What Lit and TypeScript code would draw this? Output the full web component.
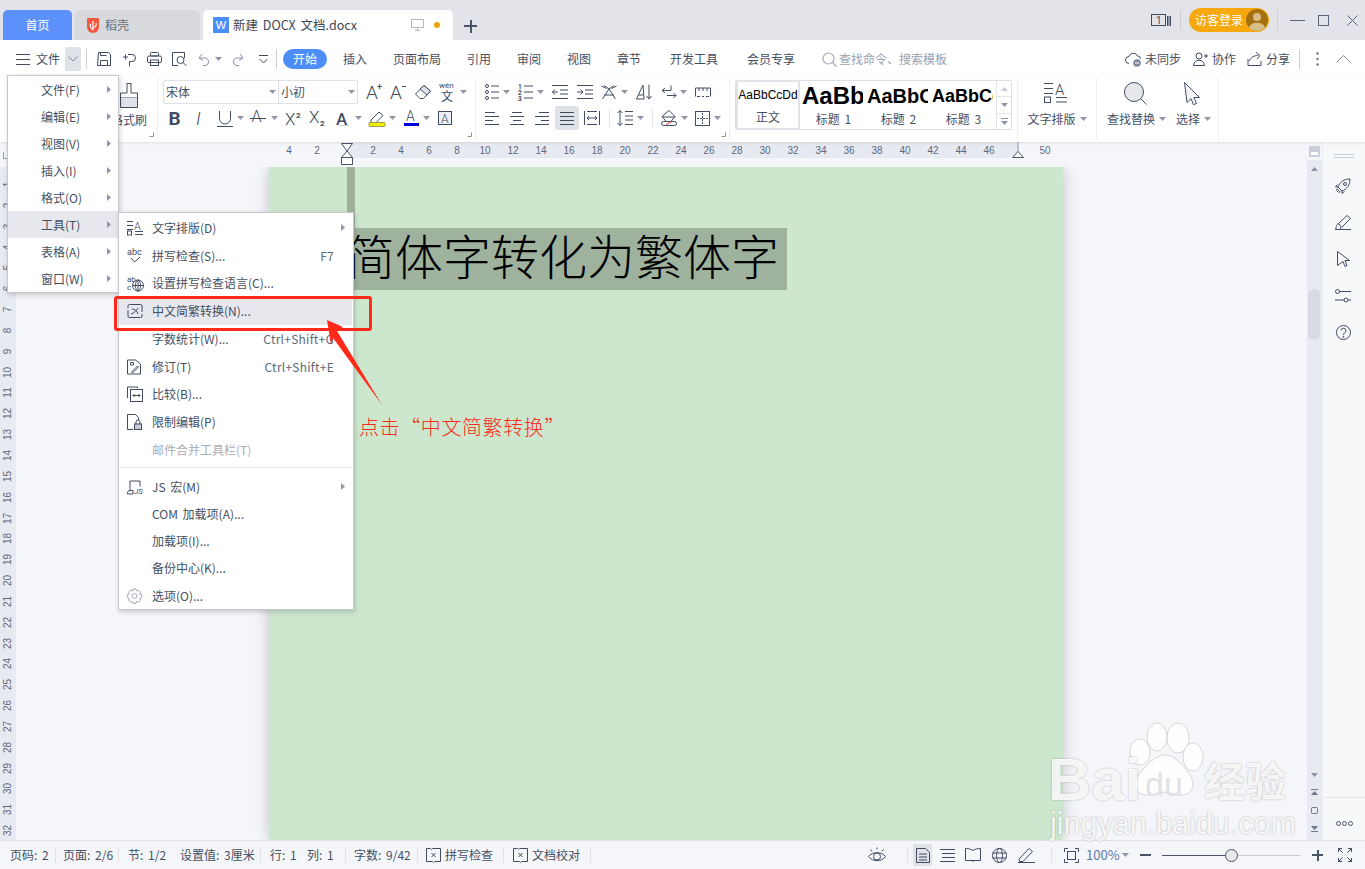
import { LitElement, html, css } from "lit";
import { customElement } from "lit/decorators.js";
import { unsafeSVG } from "lit/directives/unsafe-svg.js";

const S = (w: number, h: number, c: string) =>
  html`<svg class="ic" width=${w} height=${h} viewBox="0 0 ${w} ${h}">${unsafeSVG(c)}</svg>`;

// place items along a row: x values are turned into gaps between flowing cells
const row = (start: number, items: [number, number, unknown][], cls = "row") => {
  let p = start;
  return html`<div class=${cls}>${items.map(([x, w, t]) => {
    const m = x - p;
    p = x + w;
    return html`<div class="cell" style="margin-left:${m}px;width:${w}px">${t}</div>`;
  })}</div>`;
};
const T = (s: string, cls = "") => html`<span class="t ${cls}">${s}</span>`;
const caret = S(7, 4, '<path d="M0 0h7L3.5 4z" fill="#8f96a6" stroke="none"/>');
const tx = (x: number, y: number, s: string, size: number, extra = "") =>
  `<text x="${x}" y="${y}" font-size="${size}" font-family="Roboto, Liberation Sans, sans-serif" fill="#414b62" stroke="none" ${extra.includes("font-weight") ? "" : 'font-weight="300"'} ${extra}>${s}</text>`;
const lines = (arr: number[][]) => arr.map(([a, b, c, d]) => `<path d="M${a} ${b}L${c} ${d}"/>`).join("");

const I = {
  burger: S(14, 11, lines([[0, .5, 14, .5], [0, 5.5, 14, 5.5], [0, 10.5, 14, 10.5]])),
  chev: S(10, 6, '<path d="M.5 .5L5 5 9.5 .5" stroke="#7d8597"/>'),
  save: S(14, 14, '<path d="M1.5.5h10l2 2v11h-13z"/><path d="M3.5 13.5v-5h7v5"/><path d="M3.5.5v3h6"/>'),
  pdf: S(15, 15, '<path d="M6 2.5h4a3.5 3.5 0 0 1 0 7H7.5v5"/><path d="M1 5h5M3.5 2.5v5"/>'),
  print: S(15, 14, '<rect x="3.5" y=".5" width="8" height="3.5" rx="1"/><rect x=".5" y="4" width="14" height="6.5" rx="1.5"/><rect x="3.5" y="8" width="8" height="5.5"/>'),
  preview: S(15, 15, '<path d="M6 13.5H.5v-13h12V6"/><circle cx="8.5" cy="8" r="3.5"/><path d="M11 10.5l3.5 3.5"/>'),
  undo: S(13, 13, '<path d="M4 1L1 5l4 2.5M1.5 5H8a4 4 0 0 1 0 7.5H5" stroke="#8b93a5"/>'),
  redo: S(13, 13, '<path d="M9 1l3 4-4 2.5M11.5 5H5a4 4 0 0 0 0 7.5h3" stroke="#8b93a5"/>'),
  more: S(11, 9, '<path d="M1 .5h9M1.5 4L5.5 8 9.5 4"/>'),
  search: S(15, 15, '<circle cx="6.5" cy="6.5" r="5.5" stroke="#a4abba" stroke-width="1.2"/><path d="M10.5 10.5l4 4" stroke="#a4abba" stroke-width="1.2"/>'),
  cloud: S(16, 15, '<path d="M4 11.5a3.5 3.5 0 0 1 0-7 4.5 4.5 0 0 1 8.5-.5 3 3 0 0 1 3 3"/><circle cx="12" cy="11" r="3.8" fill="#808a9e" stroke="none"/><path d="M10 11h4" stroke="#fff"/>'),
  user: S(16, 14, '<circle cx="6" cy="4" r="3"/><path d="M.5 13.5c0-7 11-7 11 0z"/><path d="M11 4h4M13 2v4"/>'),
  share: S(15, 14, '<path d="M1 7v6.5h13V9"/><path d="M2.5 9C4 5 7 3.5 11 3.5M9 .5l4 3-3 3.5"/>'),
  vdots: S(3, 14, '<circle cx="1.5" cy="1.5" r="1.2" fill="#6b7487" stroke="none"/><circle cx="1.5" cy="7" r="1.2" fill="#6b7487" stroke="none"/><circle cx="1.5" cy="12.5" r="1.2" fill="#6b7487" stroke="none"/>'),
  up: S(15, 8, '<path d="M.5 7.5L7.5 .5l7 7" stroke="#7d8597"/>'),
  brush: S(20, 25, '<path d="M8 .5h4v9.5h6.5v5H1.5V10H8z" /><path d="M1.5 15v9.500h17V15" fill="#dfe2e8"/>'),
  aplus: S(16, 16, tx(0, 15, "A", 19) + tx(11, 6, "+", 9, 'font-weight="500"')),
  aminus: S(16, 16, tx(0, 15, "A", 19) + '<path d="M12 2.5h4"/>'),
  eraser: S(16, 16, '<path d="M.5 10L9 1.5l6.5 5.5-7 7.5H5z"/><path d="M9 1.5l6.5 5.5-3.5 4-7-6z" fill="#dfe2e8"/>'),
  pinyin: S(16, 20, tx(0, 6, "wén", 8, 'font-weight="400"') + `<text x="2" y="19" font-size="12" font-family="Noto Sans CJK SC" fill="#414b62" stroke="none">文</text>`),
  bold: S(12, 15, tx(-.5, 14, "B", 19, 'font-weight="700"')),
  ital: S(9, 15, tx(0, 14, "I", 18, 'font-style="italic"')),
  under: S(16, 17, '<path d="M2.5 1v7.5a5.500 5.500 0 0 0 11 0V1"/><path d="M0 16.5h16"/>'),
  strike: S(16, 16, tx(1.5, 12, "A", 16) + '<path d="M0 8.5h16"/>'),
  sup: S(16, 15, tx(0, 14, "X", 17) + tx(11, 7, "2", 8, 'font-weight="700"')),
  sub: S(17, 16, tx(0, 13, "X", 17) + tx(11, 16, "2", 8, 'font-weight="700"')),
  aeff: S(15, 15, tx(1, 14, "A", 17, 'font-weight="500"') + '<path d="M4 14.5h10" stroke="#c8cbd2"/>'),
  hl: S(16, 17, '<path d="M2 10L10 2l4 3.5-7 7H2z"/><rect x="0" y="12.5" width="16" height="4" rx="1" fill="#f6ee00" stroke="#9a9a60"/>'),
  color: S(15, 16, tx(2, 11, "A", 14) + '<rect y="13" width="15" height="3" fill="#0000e0" stroke="none"/>'),
  boxa: S(14, 14, '<rect x=".5" y=".5" width="13" height="13" fill="#eef0f3"/>' + tx(3, 12, "A", 12)),
  bullets: S(14, 16, [2, 8, 14].map(y => `<circle cx="2" cy="${y}" r="1.5"/><path d="M6 ${y}h8"/>`).join("")),
  numbers: S(15, 16, [2, 8, 14].map((y, i) => tx(0, y + 3, String(i + 1), 6.5, 'font-weight="700"') + `<path d="M6 ${y}h9"/>`).join("")),
  outdent: S(16, 14, lines([[0, .5, 16, .5], [8, 5, 16, 5], [8, 9, 16, 9], [0, 13.5, 16, 13.5], [0, 7, 6, 7]]) + '<path d="M3 4.5L.5 7 3 9.5"/>'),
  indent: S(16, 14, lines([[0, .5, 16, .5], [8, 5, 16, 5], [8, 9, 16, 9], [0, 13.5, 16, 13.5], [0, 7, 6, 7]]) + '<path d="M3.5 4.5L6 7 3.5 9.5"/>'),
  xa: S(16, 15, '<path d="M.5 1l5 2.5M15.5 1l-5 2.5M3 .5L8 4l5-3.5M8 4L1.5 14M8 4l6.5 10M3 10h10"/>'),
  sort: S(17, 16, '<path d="M.5 15L7 1l1 14zM2.5 11H7.5"/><path d="M13 .5v14M10.5 12l2.5 3 2.5-3"/>'),
  bidi: S(16, 14, '<path d="M10 .5v5H1.5M4 3L1 5.5 4 8"/><path d="M6 10.5h9M12.5 8l2.5 2.5-2.5 2.5"/>'),
  rulerI: S(16, 10, '<path d="M.5 9.5V1h15v8.500M4 1v3M8 1v3M12 1v3M2 9.5h3M7 9.5h2M11 9.5h3"/>'),
  al: S(14, 13, lines([[0, .5, 10, .5], [0, 4.5, 14, 4.5], [0, 8.5, 8, 8.5], [0, 12.5, 14, 12.5]])),
  ac: S(14, 13, lines([[2, .5, 12, .5], [0, 4.5, 14, 4.5], [3, 8.5, 11, 8.5], [0, 12.5, 14, 12.5]])),
  ar: S(14, 13, lines([[4, .5, 14, .5], [0, 4.5, 14, 4.5], [6, 8.5, 14, 8.5], [0, 12.5, 14, 12.5]])),
  aj: S(14, 13, lines([[0, .5, 14, .5], [0, 4.5, 14, 4.5], [0, 8.5, 14, 8.5], [0, 12.5, 14, 12.5]])),
  dist: S(16, 14, lines([[.5, 0, .5, 14], [15.5, 0, 15.5, 14], [3, .5, 13, .5], [3, 7, 13, 7], [3, 13.5, 13, 13.5]]) + '<path d="M5 5l-2 2 2 2M11 5l2 2-2 2"/>'),
  lh: S(16, 16, '<path d="M3 .5v15M.5 3L3 .5 5.5 3M.5 13L3 15.5 5.5 13"/>' + lines([[8, 1.5, 16, 1.5], [8, 6, 16, 6], [8, 10, 16, 10], [8, 14.5, 16, 14.5]])),
  shade: S(16, 16, '<path d="M1 6.5L8 .5l6 6-5 6H6z"/><path d="M1 7h13"/><rect x=".5" y="11.5" width="15" height="4" rx="2" fill="#fff"/><path d="M5 14.5l6-3" stroke="#e04040"/>'),
  borders: S(15, 15, '<rect x=".5" y=".5" width="14" height="14"/><path d="M7.5 2v11M2 7.5h11" stroke-dasharray="2 1"/>'),
  textlay: S(23, 21, lines([[0, 1.5, 9, 1.5], [0, 6.5, 9, 6.5], [0, 11.5, 9, 11.5], [12, 15.5, 23, 15.5], [12, 20, 23, 20]]) + '<rect x=".5" y="15" width="6" height="5.5"/>' + tx(11, 12.5, "A", 15)),
  bigsearch: S(23, 23, '<circle cx="10" cy="10" r="9.5" fill="#e6e8ee"/><path d="M17 17l5.5 5.5"/>'),
  pointer: S(16, 23, '<path d="M.5 .5l15 15h-5.500l2.500 6-3 1.200-2.500-6L3 20.500z" fill="#f4f5f8"/>'),
  dlg: S(5, 5, '<path d="M.5 4.5h4V.5" stroke="#8b93a5"/>'),
  mTxt: S(16, 15, lines([[0, 1, 6, 1], [0, 5, 6, 5], [0, 9, 6, 9], [8, 11, 16, 11], [8, 14, 16, 14]]) + '<rect x=".5" y="10.5" width="4" height="4"/>' + tx(7, 9, "A", 11)),
  mAbc: S(16, 16, tx(0, 7, "abc", 9, 'font-weight="400"') + '<path d="M4 10l3.5 4L13 9"/>'),
  mLang: S(17, 17, tx(0, 7, "ab", 8, 'font-weight="400"') + tx(0, 15, "c", 8, 'font-weight="400"') + '<circle cx="11" cy="11" r="5.5"/><path d="M5.5 11h11M11 5.5v11"/><ellipse cx="11" cy="11" rx="2.5" ry="5.5"/>'),
  mConv: S(16, 16, '<path d="M1 5V3a1.500 1.500 0 0 1 1.500-1.500h11A1.500 1.500 0 0 1 15 3v6M15 11v2a1.500 1.500 0 0 1-1.500 1.500h-11A1.500 1.500 0 0 1 1 13V7"/><path d="M5 6c3 0 5 2 6 5M11 5C9 8 7 10 4 11"/>'),
  mRev: S(14, 15, '<path d="M.5 .5h8l5 4v10H.5z"/><path d="M3.5 3h3v2.500h-3z"/><path d="M5 12l5.500-5.500 1 1L6 13H5z"/>'),
  mCmp: S(16, 16, '<path d="M.5 12V1h10v1"/><rect x="3.5" y="3.5" width="12" height="12"/><path d="M6 9.5h7M7.5 8L6 9.5 7.5 11M11.5 8L13 9.5 11.5 11"/>'),
  mLock: S(15, 16, '<path d="M6 15.5H.5V.5h8l3 3V6"/><rect x="7.5" y="10" width="7" height="5.5" fill="#c8ccd5"/><path d="M9 10V8a2 2 0 0 1 4 0v2"/>'),
  mJs: S(16, 15, '<path d="M3 11V1.500h10V7"/><path d="M.5 14.500c0-3 1-3.500 2.500-3.500h3v3.500z"/>' + tx(7, 14.5, "JS", 8, 'font-weight="400" font-style="italic"')),
  gear: S(15, 15, '<path d="M6 .5h3l.6 2 1.800-.9 2.200 2.200-.9 1.800 2 .6v3l-2 .6.9 1.800-2.200 2.200-1.800-.9-.6 2H6l-.6-2-1.800.9-2.200-2.200.9-1.800-2-.6v-3l2-.6-.9-1.800 2.200-2.200 1.800.9z" stroke="#a4abba"/><circle cx="7.500" cy="7.500" r="2.500" stroke="#a4abba"/>'),
  spell: S(15, 14, '<path d="M.5 13.5V.5h4l1 1 1-1H14.5v13H8.500l-1 1-1-1z"/><path d="M5.5 5l4 4M9.5 5l-4 4"/>'),
  eye: S(18, 16, '<path d="M.5 9.5C4 4.500 14 4.500 17.500 9.500 14 15 4 15 .5 9.500z"/><circle cx="9" cy="9.5" r="3.5"/><path d="M2.5 2.5l1.500 2M15.5 2.500l-1.500 2M9 .5v2"/>'),
  page: S(14, 15, '<path d="M.5 .5h9l4 4v10H.5z"/><path d="M3 6h8M3 9h8M3 12h8"/>'),
  outline: S(15, 13, lines([[0, .5, 15, .5], [2, 4.5, 15, 4.5], [2, 8.5, 15, 8.5], [0, 12.5, 15, 12.5]])),
  book: S(16, 15, '<path d="M8 2.5C6 1 3 .5 .5 .5v12H8v1.500M8 2.500C10 1 13 .5 15.500 .5v12H8"/>'),
  globe: S(15, 15, '<circle cx="7.5" cy="7.5" r="7"/><ellipse cx="7.5" cy="7.5" rx="3" ry="7"/><path d="M.5 5h14M.5 10h14"/>'),
  pen: S(17, 16, '<path d="M1 12L11 1.500l3.500 3L5 14.500H1.500z"/><path d="M0 15.5h17"/>'),
  fit: S(15, 15, '<rect x="3.5" y="3.5" width="8" height="8"/><path d="M.5 4V.5H4M11 .5h3.500V4M14.500 11v3.500H11M4 14.500H.5V11"/>'),
  full: S(14, 14, '<path d="M.5 4V.5H4M.5 .5l4 4M10 .5h3.500V4M13.500 .5l-4 4M13.500 10v3.500H10M13.500 13.500l-4-4M4 13.500H.5V10M.5 13.500l4-4"/>'),
  rocket: S(16, 16, '<path d="M5 11l-2-2c2-5 6-8 12-8 0 6-3 10-8 12z"/><circle cx="10" cy="6" r="1.5"/><path d="M3 9H.5l2-2.500M7 13v2.500l2.500-2M1 12l2-1M2 14l2-2M4 15l1-2"/>'),
  brushP: S(16, 15, '<path d="M3 9L12 .5l3.500 3L7 12"/><path d="M1 14.500c0-3 .5-6 3-5.500l2 2.500-.5 3"/><path d="M0 14.5h16"/>'),
  cursor: S(13, 16, '<path d="M.5 .5l12 9H8l2 5-2 1-2-5-5.500 4z"/>'),
  sliders: S(16, 14, '<circle cx="2.5" cy="2.5" r="2"/><path d="M4.5 2.5H16M0 11h9"/><circle cx="11" cy="11" r="2"/><path d="M13 11h3"/>'),
  help: S(15, 15, '<circle cx="7.5" cy="7.5" r="7"/><path d="M5 5.5a2.500 2.500 0 1 1 3.500 2.500c-.7.4-1 .8-1 2"/><circle cx="7.5" cy="12" r=".6"/>'),
  tabsI: S(20, 12, '<rect x=".5" y=".5" width="14" height="11"/>' + tx(5, 10, "1", 10, 'font-weight="400"') + '<path d="M16.5 2v10M18 2v10M19.5 2v10"/>'),
  daoke: S(12, 15, '<path d="M1 0h10a1 1 0 0 1 1 1v8a6 6 0 0 1-12 0V1a1 1 0 0 1 1-1z" fill="#f1583f" stroke="none"/><path d="M6 3v9M6 12C3.500 10 3 8 3.500 6M6 10c3-1 3.500-3 3-5" stroke="#fff" stroke-width="1.200"/>'),
};

const rul = [4, 2, 0];
for (let i = 2; i <= 46; i += 2) rul.push(i);
rul.push(0, 50);
const vnums = Array.from({ length: 32 }, (_, i) => i + 1);

const mainMenu = ["文件(F)", "编辑(E)", "视图(V)", "插入(I)", "格式(O)", "工具(T)", "表格(A)", "窗口(W)"];
const toolsA: [unknown, string, string?, string?][] = [
  [I.mTxt, "文字排版(D)", "", "sub"],
  [I.mAbc, "拼写检查(S)...", "F7"],
  [I.mLang, "设置拼写检查语言(C)..."],
  [I.mConv, "中文简繁转换(N)...", "", "on"],
  [null, "字数统计(W)...", "Ctrl+Shift+G"],
  [I.mRev, "修订(T)", "Ctrl+Shift+E"],
  [I.mCmp, "比较(B)..."],
  [I.mLock, "限制编辑(P)"],
  [null, "邮件合并工具栏(T)", "", "off"],
];
const toolsB: [unknown, string, string?, string?][] = [
  [I.mJs, "JS 宏(M)", "", "sub"],
  [null, "COM 加载项(A)..."],
  [null, "加载项(I)..."],
  [null, "备份中心(K)..."],
  [I.gear, "选项(O)..."],
];
const arrowR = S(4, 7, '<path d="M0 0l4 3.5L0 7z" fill="#8f96a6" stroke="none"/>');

@customElement("app-root")
export class AppRoot extends LitElement {
  static styles = css`
    :host { display: block; width: 1365px; height: 869px; position: relative; overflow: hidden; background: #f5f6fa;
      font: 12px/16px "Noto Sans CJK SC", "Liberation Sans", sans-serif; color: #454f62; word-spacing: 2px; }
    .ic { display: block; fill: none; stroke: #414b62; stroke-width: 1; flex: none; overflow: visible; }
    .t { white-space: nowrap; display: block; }
    .row { display: flex; align-items: center; }
    .h40 { height: 40px; }
    .cell { flex: none; display: flex; align-items: center; }
    .title { height: 40px; background: #e2e4e9; display: flex; align-items: flex-end; padding-left: 3px; position: relative; }
    .tab { height: 30px; display: flex; align-items: center; border-radius: 5px 5px 0 0; flex: none; box-sizing: border-box; }
    .home { width: 69px; background: #5c90fb; color: #fff; justify-content: center; }
    .dk { width: 125px; margin-left: 3px; background: #d7d9dd; padding-left: 12px; gap: 6px; color: #666e7c; }
    .doc { width: 250px; margin-left: 3px; background: #fff; padding-left: 10px; color: #3d4656; font-size: 12.5px; }
    .wi { width: 16px; height: 16px; background: #4a8ff5; color: #fff; font: 11px/16px "Liberation Sans", sans-serif; text-align: center; margin-right: 4px; flex: none; }
    .doc .name { width: 178px; white-space: nowrap; }
    .dot { width: 6px; height: 6px; border-radius: 50%; background: #f0a30a; margin-left: 10px; }
    .plus { margin-left: 11px; width: 13px; height: 13px; align-self: center; margin-top: 12px; background: linear-gradient(#4a5468,#4a5468) center/13px 2px no-repeat, linear-gradient(#4a5468,#4a5468) center/2px 13px no-repeat; }
    .tright { margin-left: auto; align-self: flex-start; height: 40px; }
    .pill { height: 24px; width: 80px; border-radius: 12px; background: #f6a80d; color: #fff; display: flex; align-items: center; box-sizing: border-box; padding-left: 6px; justify-content: space-between; padding-right: 1px; }
    .ava { width: 22px; height: 22px; border-radius: 50%; background: #a5700f; display: block; }
    .vs { width: 1px; height: 20px; background: #ccced4; }
    .bar { height: 36px; background: #fff; padding-top: 2px; box-sizing: border-box; }
    .bar .row { height: 34px; }
    .chb { width: 16px; height: 24px; background: #dfe2e6; border-radius: 2px; display: flex; align-items: center; justify-content: center; }
    .start { width: 44px; height: 20px; border-radius: 10px; background: #4c8ef5; color: #fff; text-align: center; line-height: 20px; }
    .muted { color: #9aa1af; }
    .ribbon { height: 66px; background: #fff; display: flex; position: relative; z-index: 1; box-shadow: 0 1px 3px rgba(0,0,0,.1); }
    .sec { flex: none; height: 62px; margin-top: 2px; border-right: 1px solid #eceef1; position: relative; box-sizing: border-box; }
    .sec .row { height: 24px; margin-top: 2px; }
    .dl { position: absolute; right: 3px; bottom: 3px; }
    .painter { display: flex; flex-direction: column; align-items: flex-end; padding-right: 10px; padding-top: 5px; }
    .painter .t { margin-top: 4px; }
    .pb { margin-right: 8px; }
    .fbox { width: 195px; height: 24px; border: 1px solid #dfe1e6; border-radius: 2px; box-sizing: border-box; display: flex; }
    .fbox div { display: flex; align-items: center; justify-content: space-between; padding: 0 2px; box-sizing: border-box; }
    .f1 { width: 115px; border-right: 1px solid #dfe1e6; }
    .f2 { flex: 1; }
    .jb { background: #dfe2e6; width: 24px; height: 24px; border-radius: 2px; display: flex; align-items: center; justify-content: center; }
    .gsep { width: 1px; height: 18px; background: #e2e4e9; }
    .gal { margin: 2px 0 0 5px; width: 277px; height: 50px; border: 1px solid #dcdfe5; border-radius: 2px; display: flex; box-sizing: border-box; }
    .st { width: 65px; flex: none; overflow: hidden; text-align: center; box-sizing: border-box; height: 48px; }
    .st.first { width: 64px; border: 2px solid #e2e3e8; margin: -1px 1px 0 0; height: 50px; }
    .sm { font-family: "Liberation Sans", sans-serif; color: #000; height: 30px; line-height: 30px; white-space: nowrap; font-weight: 700; text-align: left; padding-left: 1px; width: 61px; overflow: hidden; }
    .first .sm { font-size: 12px; font-weight: 400; line-height: 26px; height: 26px; padding: 0; text-align: center; width: auto; }
    .s1 { font-size: 24px; } .s2 { font-size: 20px; } .s3 { font-size: 18px; }
    .lb { line-height: 16px; font-size: 12px; }
    .first .lb { margin-top: 1px; }
    .spin { margin-left: auto; width: 15px; border-left: 1px solid #e4e6ea; display: flex; flex-direction: column; }
    .spin div { flex: 1; display: flex; align-items: center; justify-content: center; border-bottom: 1px solid #e4e6ea; }
    .spin div:last-child { border: 0; }
    .big { display: flex; flex-direction: column; align-items: center; }
    .bigrow { display: flex; }
    .bighead { height: 28px; padding-top: 4px; margin-bottom: 1px; padding-right: 3px; }
    .lbl { display: flex; align-items: center; gap: 4px; white-space: nowrap; }
    .mid { height: 698px; display: flex; }
    .left { width: 1306px; flex: none; display: flex; flex-direction: column; }
    .ruler { height: 25px; flex: none; position: relative; display: flex; padding-left: 275px; color: #5f687a; font: 10px/16px "Liberation Sans", sans-serif;
      background: linear-gradient(#e8eaf1, #e8eaf1) 347px 0 / 671px 16px no-repeat, #f5f6fa; }
    .ruler span { width: 28px; flex: none; text-align: center; height: 16px; line-height: 18px; }
    .rm { position: absolute; }
    .rm.a { left: 341px; top: 1px; }
    .rm.b { left: 1012px; top: 0; }
    .lmark { position: absolute; left: 3px; top: 10px; width: 5px; height: 6px; border-left: 1px solid #9aa1af; border-bottom: 1px solid #9aa1af; }
    .body { flex: 1; display: flex; min-height: 0; }
    .vr { width: 16px; flex: none; background: #e8eaf1; padding-top: 7px; box-sizing: border-box; overflow: hidden; color: #5f687a; font: 10px/20.85px "Liberation Sans", sans-serif; }
    .vr span { display: block; height: 20.85px; width: 16px; transform: rotate(-90deg); text-align: center; }
    .area { flex: 1; padding-left: 253px; background: #f5f6fa; overflow: hidden; }
    .paper { width: 794px; height: 100%; background: #cde7cf; box-shadow: 0 0 15px rgba(0,0,0,.2); padding-left: 78px; box-sizing: border-box; }
    .gut { width: 8px; height: 61px; background: #9eb29e; }
    .sel { width: 440px; height: 62px; background: #9eb29e; color: #000; font: 300 48px/62px "Liberation Serif", "Noto Sans CJK SC", serif; white-space: nowrap; }
    .scroll { width: 16px; flex: none; display: flex; flex-direction: column; align-items: center; background: #f5f6fa; }
    .sctop { width: 11px; height: 11px; margin-top: 4px; background: #c9cedb; border-radius: 1px; flex: none; display: flex; align-items: flex-end; justify-content: center; }
    .sctop i { display: block; width: 7px; height: 3px; background: #fff; margin-bottom: 2px; }
    .track { width: 15px; margin-top: 3px; flex: 1; background: #e8eaf1; display: flex; flex-direction: column; align-items: center; }
    .thumb { width: 12px; height: 51px; border-radius: 6px; background: #d8dbe3; margin-top: 118px; }
    .tup { margin-top: 7px; width: 7px; height: 4px; }
    .sbot { margin-top: auto; display: flex; flex-direction: column; align-items: center; gap: 12px; padding-bottom: 8px; }
    .panel { width: 43px; flex: none; background: #f7f8fa; display: flex; flex-direction: column; align-items: center; border-left: 1px solid #eceef2; box-sizing: border-box; }
    .grip { width: 20px; border-top: 1px solid #c9cdd6; border-bottom: 1px solid #c9cdd6; margin-top: 12px; height: 2px; }
    .pi { height: 36.5px; display: flex; align-items: center; justify-content: center; flex: none; padding-right: 2px; }
    .pfirst { margin-top: 10px; }
    .pfoot { margin-top: auto; width: 100%; border-top: 1px solid #e3e5ea; height: 43px; padding-top: 8px; box-sizing: border-box; display: flex; align-items: center; justify-content: center; }
    .odot { width: 3px; height: 3px; border: 1px solid #4a5468; border-radius: 50%; margin: 0 .5px; }
    .status { height: 29px; background: #f5f6fa; border-top: 1px solid #e2e3e8; box-sizing: border-box; }
    .status .row { height: 28px; }
    .ss { width: 1px; height: 16px; background: #e0e2e7; }
    .hi { width: 19px; height: 22px; background: #dfe2e6; border-radius: 2px; display: flex; align-items: center; justify-content: center; }
    .pct { color: #5c7aa8; font-size: 13px; }
    .dash { width: 11px; height: 2px; background: #4a5468; }
    .pl { width: 11px; height: 11px; background: linear-gradient(#4a5468,#4a5468) center/11px 2px no-repeat, linear-gradient(#4a5468,#4a5468) center/2px 11px no-repeat; }
    .slide { width: 138px; height: 1px; background: linear-gradient(to right, #4a5468 0 50%, #c8ccd4 50%); position: relative; }
    .knob { position: absolute; left: 63px; top: -6px; width: 11px; height: 11px; border: 1px solid #4a5468; border-radius: 50%; background: #e8e8e8; }
    .menu { position: absolute; background: #fff; border: 1px solid #c6c8cc; box-shadow: 1px 2px 5px rgba(0,0,0,.18); box-sizing: border-box; z-index: 3; }
    .m1 { left: 7px; top: 75px; width: 112px; height: 218px; }
    .m1 .mi { height: 27px; display: flex; align-items: center; padding-left: 33px; position: relative; }
    .mi.on { background: #e6e8ed; }
    .mar { position: absolute; right: 7px; top: 50%; margin-top: -3.5px; }
    .m2 { left: 118px; top: 212px; width: 236px; height: 398px; padding-top: 1px; }
    .m2 .mi { display: flex; align-items: center; position: relative; padding-left: 33px; margin-right: 1px; }
    .ga .mi { height: 27.75px; }
    .gb .mi { height: 27.25px; }
    .mic { position: absolute; left: 8px; top: 50%; transform: translateY(-50%); }
    .sc { position: absolute; right: 18px; color: #5e6778; letter-spacing: .25px; }
    .mi.off { color: #a9aeb8; }
    .msep { height: 1px; background: #e3e4e8; margin: 3px 1px 5.15px 1px; }
    .redbox { position: absolute; left: 114px; top: 296px; width: 258px; height: 35px; border: 3px solid #ff2a1a; border-radius: 3px; box-sizing: border-box; z-index: 4; }
    .arrow { position: absolute; left: 320px; top: 315px; z-index: 5; }
    .note { position: absolute; left: 359px; top: 414px; color: #ff2a1a; font: 300 20px/26px "Noto Sans CJK SC", sans-serif; letter-spacing: .6px; white-space: nowrap; z-index: 4; }
    .wm { position: absolute; left: 1045px; top: 722px; width: 250px; height: 116px; z-index: 2; color: rgba(255,255,255,.88); font-family: "Liberation Sans", sans-serif; text-shadow: 0 0 2px rgba(0,0,0,.3); word-spacing: 0; }
    .wm .bai { position: absolute; left: 3px; top: 28px; font: 700 60px/60px "Liberation Sans", sans-serif; }
    .wm .du { position: absolute; left: 100px; top: 42px; font: 400 34px/40px "Liberation Sans", sans-serif; color: rgba(222,225,230,.95); text-shadow: none; z-index: 1; }
    .wm .jy { position: absolute; left: 159px; top: 32px; font: 700 41px/50px "Noto Sans CJK SC", sans-serif; white-space: nowrap; }
    .wm .url { position: absolute; left: 5px; top: 84px; font: 400 30.5px/34px "Liberation Sans", sans-serif; white-space: nowrap; }
    .wm svg { position: absolute; left: 0; top: 0; }
  `;

  private item(i: [unknown, string, string?, string?]) {
    const [ic, label, sc, fl] = i;
    return html`<div class="mi ${fl === "on" ? "on" : ""} ${fl === "off" ? "off" : ""}">
      ${ic ? html`<div class="mic">${ic}</div>` : ""}${label}
      ${sc ? html`<span class="sc">${sc}</span>` : ""}
      ${fl === "sub" ? html`<div class="mar">${arrowR}</div>` : ""}
    </div>`;
  }

  render() {
    return html`
      <div class="title">
        <div class="tab home">首页</div>
        <div class="tab dk">${I.daoke}稻壳</div>
        <div class="tab doc"><div class="wi">W</div><span class="name">新建 DOCX 文档.docx</span>
          ${S(13, 12, '<rect x=".5" y=".5" width="12" height="8" stroke="#b4bac6"/><path d="M6.5 8.5v3M4 11.5h5" stroke="#b4bac6"/>')}
          <div class="dot"></div></div>
        <div class="plus"></div>
        <div class="tright">
          ${row(0, [
            [0, 20, I.tabsI],
            [29, 1, html`<div class="vs"></div>`],
            [38, 80, html`<div class="pill">访客登录<span class="ava">${S(22, 22, '<circle cx="11" cy="8" r="4" fill="#d8bd86" stroke="none"/><path d="M3 19c1-7 15-7 16 0-4 4-12 4-16 0z" fill="#d8bd86" stroke="none"/>')}</span></div>`],
            [126, 1, html`<div class="vs"></div>`],
            [139, 15, S(15, 1, '<path d="M0 .5h15" stroke="#5a6478"/>')],
            [167, 11, S(11, 11, '<rect x=".5" y=".5" width="10" height="10" stroke="#5a6478"/>')],
            [196, 11, S(11, 11, '<path d="M.5 .5l10 10M10.5 .5l-10 10" stroke="#5a6478"/>')],
            [213, 1, ""],
          ], "row h40")}
        </div>
      </div>
      <div class="bar">
        ${row(0, [
          [16, 14, I.burger], [36, 24, T("文件")], [65, 16, html`<div class="chb">${I.chev}</div>`],
          [86, 1, html`<div class="vs"></div>`],
          [97, 14, I.save], [122, 15, I.pdf], [147, 15, I.print], [172, 15, I.preview],
          [198, 13, I.undo], [215, 7, caret], [231, 13, I.redo], [258, 11, I.more],
          [276, 1, html`<div class="vs"></div>`],
          [283, 44, html`<div class="start">开始</div>`],
          [343, 24, T("插入")], [393, 48, T("页面布局")], [467, 24, T("引用")], [517, 24, T("审阅")],
          [567, 24, T("视图")], [617, 24, T("章节")], [670, 48, T("开发工具")], [747, 48, T("会员专享")],
          [822, 15, I.search], [839, 108, T("查找命令、搜索模板", "muted")],
          [1125, 16, I.cloud], [1145, 36, T("未同步")], [1193, 16, I.user], [1212, 24, T("协作")],
          [1247, 15, I.share], [1266, 26, T("分享")], [1299, 1, html`<div class="vs"></div>`],
          [1316, 3, I.vdots], [1336, 15, I.up],
        ])}
      </div>
      <div class="ribbon">
        <div class="sec painter" style="width:158px"><div class="pb">${I.brush}</div>${T("格式刷")}<div class="dl">${I.dlg}</div></div>
        <div class="sec" style="width:318px">
          ${row(158, [
            [163, 195, html`<div class="fbox"><div class="f1">宋体${caret}</div><div class="f2">小初${caret}</div></div>`],
            [366, 16, I.aplus], [390, 16, I.aminus], [415, 16, I.eraser], [439, 16, I.pinyin], [460, 7, caret],
          ])}
          ${row(158, [
            [169, 12, I.bold], [196, 9, I.ital], [217, 16, I.under], [237, 7, caret], [250, 16, I.strike], [271, 7, caret],
            [285, 16, I.sup], [309, 17, I.sub], [335, 15, I.aeff], [355, 7, caret], [369, 16, I.hl], [389, 7, caret],
            [404, 15, I.color], [423, 7, caret], [438, 14, I.boxa],
          ])}
          <div class="dl">${I.dlg}</div>
        </div>
        <div class="sec" style="width:254px">
          ${row(476, [
            [485, 14, I.bullets], [503, 7, caret], [518, 15, I.numbers], [537, 7, caret], [552, 16, I.outdent], [577, 16, I.indent],
            [601, 16, I.xa], [621, 7, caret], [636, 17, I.sort], [661, 16, I.bidi], [680, 7, caret], [695, 16, I.rulerI],
          ])}
          ${row(476, [
            [485, 14, I.al], [510, 14, I.ac], [535, 14, I.ar], [555, 24, html`<div class="jb">${I.aj}</div>`], [584, 16, I.dist],
            [609, 1, html`<div class="gsep"></div>`], [617, 16, I.lh], [637, 7, caret], [652, 1, html`<div class="gsep"></div>`],
            [661, 16, I.shade], [681, 7, caret], [695, 15, I.borders], [714, 7, caret],
          ])}
          <div class="dl">${I.dlg}</div>
        </div>
        <div class="sec" style="width:288px">
          <div class="gal">
            <div class="st first"><div class="sm">AaBbCcDd</div><div class="lb">正文</div></div>
            <div class="st"><div class="sm s1">AaBb</div><div class="lb">标题 1</div></div>
            <div class="st"><div class="sm s2">AaBbC</div><div class="lb">标题 2</div></div>
            <div class="st"><div class="sm s3">AaBbCc</div><div class="lb">标题 3</div></div>
            <div class="spin">
              <div>${S(7, 4, '<path d="M0 4h7L3.5 0z" fill="#c6cad3" stroke="none"/>')}</div>
              <div>${caret}</div>
              <div>${S(7, 7, '<path d="M0 .5h7" stroke="#8f96a6"/><path d="M0 3h7L3.5 7z" fill="#8f96a6" stroke="none"/>')}</div>
            </div>
          </div>
        </div>
        <div class="sec" style="width:79px">
          <div class="big"><div class="bighead">${I.textlay}</div><div class="lbl">文字排版${caret}</div></div>
        </div>
        <div class="sec bigrow" style="width:122px">
          <div class="big" style="width:79px"><div class="bighead">${I.bigsearch}</div><div class="lbl">查找替换${caret}</div></div>
          <div class="big" style="width:35px"><div class="bighead">${I.pointer}</div><div class="lbl">选择${caret}</div></div>
        </div>
      </div>
      <div class="mid">
        <div class="left">
          <div class="ruler">
            <div class="lmark"></div>
            ${rul.map(n => html`<span>${n || ""}</span>`)}
            <div class="rm a">${S(12, 22, '<path d="M.5 .5h11L6 8zM6 8l5.5 6.500H.5zM.5 14.500h11v7H.5z" fill="#fff" stroke="#4a5468"/>')}</div>
            <div class="rm b">${S(12, 16, '<path d="M6 0v10" stroke="#8f96a6"/><path d="M6 9.5l5.5 6H.5z" fill="#fff" stroke="#4a5468"/>')}</div>
          </div>
          <div class="body">
            <div class="vr">${vnums.map(n => html`<span>${n}</span>`)}</div>
            <div class="area"><div class="paper">
              <div class="gut"></div>
              <div class="sel">简体字转化为繁体字</div>
            </div></div>
          </div>
        </div>
        <div class="scroll">
          <div class="sctop"><i></i></div>
          <div class="track">
            <div class="tup">${S(7, 4, '<path d="M0 4h7L3.5 0z" fill="#8f96a6" stroke="none"/>')}</div>
            <div class="thumb"></div>
            <div class="sbot">
              ${caret}
              ${S(7, 6, '<path d="M0 .5h7" stroke="#6f788c"/><path d="M0 6h7L3.5 2z" fill="#6f788c" stroke="none"/>')}
              ${S(7, 7, '<rect x=".5" y=".5" width="6" height="6" rx="1" stroke="#6f788c"/>')}
              ${S(7, 6, '<path d="M0 5.5h7" stroke="#6f788c"/><path d="M0 0h7L3.5 4z" fill="#6f788c" stroke="none"/>')}
            </div>
          </div>
        </div>
        <div class="panel">
          <div class="grip"></div>
          <div class="pi pfirst">${I.rocket}</div>
          <div class="pi">${I.brushP}</div>
          <div class="pi">${I.cursor}</div>
          <div class="pi">${I.sliders}</div>
          <div class="pi">${I.help}</div>
          <div class="pfoot"><i class="odot"></i><i class="odot"></i><i class="odot"></i></div>
        </div>
      </div>
      <div class="status">
        ${row(0, [
          [10, 40, T("页码: 2")], [55, 1, html`<div class="ss"></div>`], [63, 52, T("页面: 2/6")], [118, 1, html`<div class="ss"></div>`],
          [128, 40, T("节: 1/2")], [180, 76, T("设置值: 3厘米")], [260, 1, html`<div class="ss"></div>`],
          [270, 28, T("行: 1")], [307, 28, T("列: 1")], [345, 1, html`<div class="ss"></div>`], [354, 58, T("字数: 9/42")],
          [417, 1, html`<div class="ss"></div>`], [426, 15, I.spell], [445, 48, T("拼写检查")], [503, 1, html`<div class="ss"></div>`],
          [513, 15, I.spell], [532, 48, T("文档校对")], [590, 1, html`<div class="ss"></div>`],
          [868, 18, I.eye], [907, 1, html`<div class="ss"></div>`], [913, 19, html`<div class="hi">${I.page}</div>`],
          [940, 15, I.outline], [965, 16, I.book], [992, 15, I.globe], [1018, 17, I.pen], [1051, 1, html`<div class="ss"></div>`],
          [1064, 15, I.fit], [1086, 34, html`<span class="t pct">100%</span>`], [1122, 7, caret], [1140, 11, html`<div class="dash"></div>`],
          [1162, 138, html`<div class="slide"><div class="knob"></div></div>`], [1312, 11, html`<div class="pl"></div>`], [1338, 14, I.full],
        ])}
      </div>

      <div class="menu m1">
        ${mainMenu.map(m => html`<div class="mi ${m.startsWith("工具") ? "on" : ""}">${m}<div class="mar">${arrowR}</div></div>`)}
      </div>
      <div class="menu m2">
        <div class="ga">${toolsA.map(i => this.item(i))}</div>
        <div class="msep"></div>
        <div class="gb">${toolsB.map(i => this.item(i))}</div>
      </div>
      <div class="redbox"></div>
      <div class="arrow">${S(70, 95, '<path d="M7 5L23 12 17 16 62 90 13 23 11 30z" fill="#ff2a1a" stroke="none"/>')}</div>
      <div class="note">点击“中文简繁转换”</div>
      <div class="wm">
        <svg width="250" height="116" viewBox="0 0 250 116">
          <g fill="rgba(255,255,255,.88)" stroke="rgba(0,0,0,.14)">
            <ellipse cx="112" cy="15" rx="10" ry="14"/><ellipse cx="133" cy="16" rx="11" ry="15"/>
            <ellipse cx="95" cy="30" rx="10" ry="13"/><ellipse cx="148" cy="35" rx="10" ry="14"/>
            <path d="M120 33c10 0 17 10 24 18 6 8 6 22-8 22-8 0-10-3-16-3s-10 3-18 3c-14 0-14-14-7-22 7-8 15-18 25-18z"/>
          </g>
        </svg>
        <div class="bai">Bai</div>
        <div class="du">du</div>
        <div class="jy">经验</div>
        <div class="url">jingyan.baidu.com</div>
      </div>
    `;
  }
}
